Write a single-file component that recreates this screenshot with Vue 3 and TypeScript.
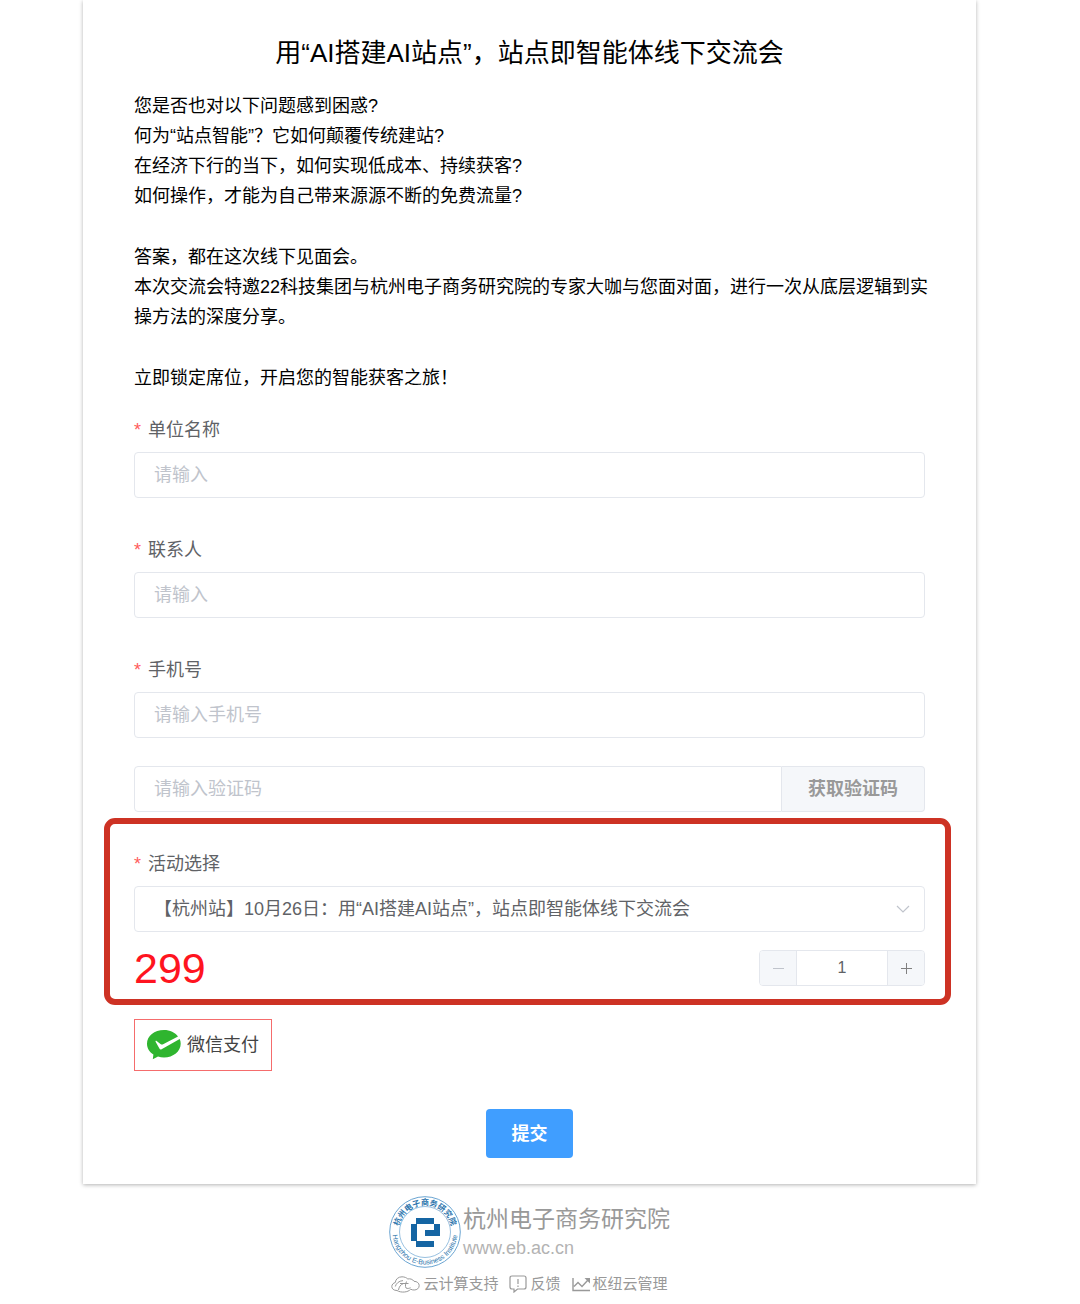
<script setup lang="ts">
import { ref } from 'vue'

interface Field {
  id: string
  label: string
  placeholder: string
}

const title = '用“AI搭建AI站点”，站点即智能体线下交流会'

const intro: string[][] = [
  [
    '您是否也对以下问题感到困惑?',
    '何为“站点智能”？它如何颠覆传统建站?',
    '在经济下行的当下，如何实现低成本、持续获客?',
    '如何操作，才能为自己带来源源不断的免费流量?',
  ],
  [
    '答案，都在这次线下见面会。',
    '本次交流会特邀22科技集团与杭州电子商务研究院的专家大咖与您面对面，进行一次从底层逻辑到实操方法的深度分享。',
  ],
  ['立即锁定席位，开启您的智能获客之旅！'],
]

const fields: Field[] = [
  { id: 'company', label: '单位名称', placeholder: '请输入' },
  { id: 'contact', label: '联系人', placeholder: '请输入' },
  { id: 'phone', label: '手机号', placeholder: '请输入手机号' },
]

const values = ref<Record<string, string>>({ company: '', contact: '', phone: '' })
const code = ref('')
const events = ['【杭州站】10月26日：用“AI搭建AI站点”，站点即智能体线下交流会']
const event = ref(events[0])
const price = 299
const count = ref(1)
</script>

<template>
  <div class="page">
    <main class="card">
      <h1>{{ title }}</h1>
      <div class="intro">
        <p v-for="(lines, i) in intro" :key="i">
          <span v-for="line in lines" :key="line">{{ line }}</span>
        </p>
      </div>

      <form @submit.prevent>
        <div v-for="f in fields" :key="f.id" class="field">
          <label :for="f.id"><span class="star">*</span>{{ f.label }}</label>
          <input :id="f.id" v-model="values[f.id]" class="box" type="text" :placeholder="f.placeholder" />
        </div>

        <div class="code">
          <input v-model="code" class="box" type="text" placeholder="请输入验证码" aria-label="验证码" />
          <button type="button">获取验证码</button>
        </div>

        <section class="event">
          <label for="event"><span class="star">*</span>活动选择</label>
          <div class="select">
            <select id="event" v-model="event" class="box">
              <option v-for="e in events" :key="e" :value="e">{{ e }}</option>
            </select>
            <svg width="14" height="8" viewBox="0 0 14 8" aria-hidden="true">
              <path d="M1 1l6 6 6-6" fill="none" stroke="#c0c4cc" stroke-width="1.2" />
            </svg>
          </div>
          <div class="order">
            <span class="price">{{ price * count }}</span>
            <div class="stepper">
              <button type="button" aria-label="减少" :disabled="count <= 1" @click="count--">
                <svg width="11" height="11" viewBox="0 0 11 11"><path d="M0 5.5h11" stroke="currentColor" /></svg>
              </button>
              <input v-model.number="count" type="text" aria-label="数量" />
              <button type="button" aria-label="增加" @click="count++">
                <svg width="11" height="11" viewBox="0 0 11 11"><path d="M0 5.5h11M5.5 0v11" stroke="currentColor" /></svg>
              </button>
            </div>
          </div>
        </section>

        <button type="button" class="wechat">
          <svg width="34" height="30" viewBox="0 0 34 30" aria-hidden="true">
            <path
              d="M17 0C7.400 0 0 6.100 0 13.700c0 4.500 2.500 8.300 6.400 10.800L5.800 29.300l5.200-2.800c1.900.6 3.900.9 6 .9 9.400 0 16.700-6.100 16.700-13.700 0-1.700-.3-3.200-1-4.700L14.600 19.200c-.9.500-1.700.3-2.200-.6L8.600 11.800c-.3-.7.300-1.200 1-.8l4.200 3.200c.7.500 1.500.5 2.300.1L31 6.500C28.100 2.500 23 0 17 0z"
              fill="#2fb52f"
            />
          </svg>
          微信支付
        </button>

        <div class="actions">
          <button type="submit" class="submit">提交</button>
        </div>
      </form>
    </main>

    <footer>
      <div class="brand">
        <svg class="logo" width="72" height="72" viewBox="0 0 72 72" role="img" aria-label="杭州电子商务研究院">
          <defs>
            <path id="arc-top" d="M10.600 43.400A26.500 26.500 0 1 1 61.400 43.400" />
            <path id="arc-bottom" d="M3.900 31A32.500 32.500 0 1 0 68.100 31" />
          </defs>
          <g fill="none" stroke="#6ba5d2">
            <circle cx="36" cy="36" r="35.3" stroke-width="1" />
            <circle cx="36" cy="36" r="25.500" stroke-width=".7" />
          </g>
          <g fill="#2f77ae" font-weight="700">
            <text font-size="8" text-anchor="middle">
              <textPath href="#arc-top" startOffset="50%">杭州电子商务研究院</textPath>
            </text>
            <text font-size="7" font-weight="400" text-anchor="middle">
              <textPath href="#arc-bottom" startOffset="50%">Hangzhou E-Business Institute</textPath>
            </text>
          </g>
          <path
            d="M27 22H45V28H51V40H36V34H45V28H28V45H45V51H27V45H22V28H27z"
            fill="#1565a3"
          />
        </svg>
        <div class="names">
          <strong>杭州电子商务研究院</strong>
          <a href="#">www.eb.ac.cn</a>
        </div>
      </div>
      <nav>
        <a href="#">
          <svg width="29" height="17" viewBox="0 0 29 17" fill="none" stroke="#999" stroke-width="1">
            <path d="M6 14.500C2.500 14.500.8 12.700.8 10.500.8 8.500 2.400 7 4.300 6.500 4.600 3 7.500.8 11 .8c2.600 0 4.600 1 5.800 2.200 2-.6 5 .2 6.200 2.300 3 0 5.200 1.900 5.200 4.200 0 2.700-2.200 4.500-5 4.500-1.300 0-2.500-.2-3.500-.8C17 16.500 10 17 6 14.500z" />
            <path d="M4.300 10.500C5 7.500 8 4.800 12 4.600M7.500 14C8 11 9.500 8.500 12.500 7.500M9 7.500h8.500M15.500 5.500c-1 2.500-1.500 4.500-.5 6.500 1.500.8 3 .5 4.500-.3" />
          </svg>
          云计算支持
        </a>
        <a href="#">
          <svg width="18" height="18" viewBox="0 0 18 18" fill="none" stroke="#999" stroke-width="1.2">
            <path d="M3 1h12q2 0 2 2v9q0 2-2 2H8.500L5 17V14H3q-2 0-2-2V3q0-2 2-2zM9 4v5M9 10.500V12" />
          </svg>
          反馈
        </a>
        <a href="#">
          <svg width="18" height="15" viewBox="0 0 18 15" fill="none" stroke="#999" stroke-width="1.400">
            <path d="M1 1v12.500h17M2 9.500l4-4 4 4L16 3" />
            <path d="M12.500 1H18v5.500z" fill="#999" stroke="none" />
          </svg>
          枢纽云管理
        </a>
      </nav>
    </footer>
  </div>
</template>

<style>
body {
  margin: 0;
  background: #fff;
}
</style>

<style scoped>
.page {
  padding: 0 104px 0 83px;
  font-family: 'Liberation Sans', 'Noto Sans CJK SC', sans-serif;
  font-size: 18px;
  color: #606266;
}
.page *,
.page {
  box-sizing: border-box;
}
button,
input,
select {
  font: inherit;
  color: inherit;
  margin: 0;
  outline: 0;
}
button {
  display: flex;
  align-items: center;
  justify-content: center;
  padding: 0;
  border: 0;
  background: none;
  line-height: 26px;
  cursor: pointer;
}
.card {
  padding: 35px 51px 26px;
  background: #fff;
  box-shadow: 0 1px 4px rgba(0, 0, 0, 0.3);
}
h1 {
  margin: 0 0 20px;
  font-size: 26px;
  font-weight: 400;
  line-height: 36px;
  text-align: center;
  color: #000;
}
.intro {
  margin: 0 -8px 24px 0;
  line-height: 30px;
  color: #000;
}
.intro p {
  margin: 0 0 31px;
}
.intro p:last-child {
  margin: 0;
}
.intro span {
  display: block;
}
.field {
  margin-bottom: 39px;
}
.field:nth-of-type(3) {
  margin-bottom: 28px;
}
label {
  display: block;
  margin-bottom: 9px;
  line-height: 26px;
}
.star {
  margin-right: 7px;
  color: #ff5c5c;
}
.box {
  display: block;
  width: 100%;
  height: 46px;
  padding: 0 19px;
  border: 1px solid #e4e7ed;
  border-radius: 4px;
  background: #fff;
}
input::placeholder {
  color: #c0c4cc;
  opacity: 1;
}
.code {
  display: flex;
}
.code .box {
  flex: 1;
  border-radius: 4px 0 0 4px;
}
.code button {
  width: 143px;
  border: 1px solid #e4e7ed;
  border-left: 0;
  border-radius: 0 4px 4px 0;
  background: #f5f7fa;
  font-weight: 700;
  color: #999;
}
.event {
  margin: 6px -26px 14px -30px;
  padding: 27px 20px 13px 24px;
  border: 6px solid #cd3224;
  border-radius: 11px;
}
.select {
  position: relative;
}
.select select {
  appearance: none;
}
.select svg {
  position: absolute;
  right: 15px;
  top: 19px;
  pointer-events: none;
}
.order {
  display: flex;
  align-items: center;
  justify-content: space-between;
  margin-top: 18px;
}
.price {
  font-size: 43px;
  line-height: 36px;
  color: #ff1420;
}
.stepper {
  display: flex;
  width: 166px;
  height: 36px;
  border: 1px solid #e4e7ed;
  border-radius: 4px;
  overflow: hidden;
}
.stepper button {
  width: 36px;
  background: #f5f7fa;
  color: #808080;
}
.stepper button:disabled {
  color: #c0c4cc;
}
.stepper input {
  flex: 1;
  min-width: 0;
  padding: 0;
  border: 1px solid #e4e7ed;
  border-width: 0 1px;
  font-size: 16px;
  text-align: center;
}
.wechat {
  gap: 6px;
  width: 138px;
  height: 52px;
  border: 1px solid #f56c6c;
  color: #444;
}
.actions {
  display: flex;
  justify-content: center;
  margin-top: 38px;
}
.submit {
  width: 87px;
  height: 49px;
  border-radius: 4px;
  background: #409eff;
  color: #fff;
  font-weight: 700;
}
footer {
  display: flex;
  flex-direction: column;
  align-items: center;
  padding-top: 12px;
  color: #999;
}
.brand {
  display: flex;
  gap: 2px;
}
.names {
  display: flex;
  flex-direction: column;
  padding-top: 8px;
}
.names strong {
  font-size: 23px;
  font-weight: 400;
  line-height: 30px;
}
.names a {
  font-size: 18px;
  line-height: 28px;
  color: #b3b3b3;
}
footer a {
  color: inherit;
  text-decoration: none;
}
nav {
  display: flex;
  gap: 11px;
  margin-top: 5px;
  font-size: 15px;
  line-height: 22px;
}
nav a {
  display: flex;
  align-items: center;
  gap: 3px;
}
</style>
